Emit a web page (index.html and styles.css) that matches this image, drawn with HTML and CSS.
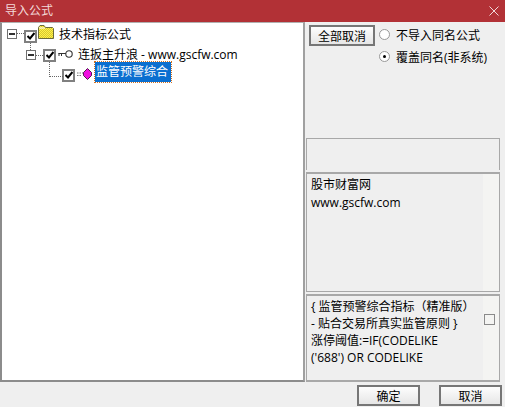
FILE: index.html
```html
<!DOCTYPE html>
<html lang="zh">
<head>
<meta charset="utf-8">
<title>导入公式</title>
<link rel="stylesheet" href="styles.css">
</head>
<body>
<div class="window">
  <header class="titlebar">
    <span class="title">导入公式</span>
    <svg class="close" width="10" height="10" viewBox="0 0 10 10"><path d="M0.5 0.5L9.5 9.5M9.5 0.5L0.5 9.5" stroke="#f0d8d8" stroke-width="1" fill="none"/></svg>
  </header>
  <div class="main">
    <div class="tree">
      <div class="row row1">
        <span class="expander"><i></i></span>
        <span class="dots d1"></span>
        <span class="check"><svg width="8" height="8" viewBox="0 0 8 8"><path d="M0.5 4L3 6.5L7.5 1" stroke="#000" stroke-width="2" fill="none"/></svg></span>
        <svg class="icon folder" width="16" height="14" viewBox="0 0 16 14"><defs><pattern id="dither" width="2" height="2" patternUnits="userSpaceOnUse"><rect width="2" height="2" fill="#fff24a"/><rect width="1" height="1" fill="#d8c830"/><rect x="1" y="1" width="1" height="1" fill="#d8c830"/></pattern></defs><path d="M0.5 13.5V2.5L2 0.5H6L7.5 2.5H14.5L15.5 3.5V13.5Z" fill="url(#dither)" stroke="#6b6b3a"/><path d="M1 3H7" stroke="#fff" fill="none"/></svg>
        <span class="label">技术指标公式</span>
      </div>
      <div class="row row2">
        <span class="expander"><i></i></span>
        <span class="dots d2"></span>
        <span class="check"><svg width="8" height="8" viewBox="0 0 8 8"><path d="M0.5 4L3 6.5L7.5 1" stroke="#000" stroke-width="2" fill="none"/></svg></span>
        <svg class="icon key" width="15" height="8" viewBox="0 0 15 8"><circle cx="11" cy="4" r="3.2" fill="#fff" stroke="#333" stroke-width="1.1"/><path d="M0.5 3.5H8M1 3V6M3.5 3.5V6" stroke="#333" fill="none"/></svg>
        <span class="label">连扳主升浪 - www.gscfw.com</span>
      </div>
      <div class="row row3">
        <span class="check"><svg width="8" height="8" viewBox="0 0 8 8"><path d="M0.5 4L3 6.5L7.5 1" stroke="#000" stroke-width="2" fill="none"/></svg></span>
        <svg class="icon gem" width="15" height="12" viewBox="0 0 15 12"><path d="M0 5H6M0 7.5H5" stroke="#777" stroke-dasharray="1.5 1" fill="none"/><path d="M10.5 0.5L14.5 4.5V7.5L10.5 11.5L6.5 7.5V4.5Z" fill="#f010e0" stroke="#401040" stroke-width="0.9"/></svg>
        <span class="label selected">监管预警综合</span>
      </div>
    </div>
    <div class="side">
      <div class="options">
        <button class="btn btn-all" type="button">全部取消</button>
        <div class="radios">
          <label class="radio"><span class="dot"></span>不导入同名公式</label>
          <label class="radio"><span class="dot on"></span>覆盖同名(非系统)</label>
        </div>
      </div>
      <div class="box box-empty"></div>
      <div class="box box-info">
        <div class="text info-text">股市财富网<br>www.gscfw.com</div>
        <div class="gutter"></div>
      </div>
      <div class="box box-code">
        <div class="text code-text">{ 监管预警综合指标（精准版）<br>- 贴合交易所真实监管原则 }<br>涨停阈值:=IF(CODELIKE<br>('688') OR CODELIKE</div>
        <div class="gutter"><span class="mini"></span></div>
      </div>
    </div>
  </div>
  <footer class="footer">
    <button class="btn btn-foot" type="button">确定</button>
    <button class="btn btn-foot" type="button">取消</button>
  </footer>
</div>
</body>
</html>
```
FILE: styles.css
```css
* { box-sizing: border-box; }
html, body { margin: 0; padding: 0; }
body {
  width: 505px;
  height: 407px;
  overflow: hidden;
  background: #efefef;
  font-family: "Open Sans", "Noto Sans CJK SC", sans-serif;
  font-size: 12px;
  color: #000;
}
.window { display: flex; flex-direction: column; height: 407px; }
.titlebar {
  height: 22px;
  flex: none;
  background: #b23136;
  color: #f3d9d9;
  display: flex;
  align-items: center;
  justify-content: space-between;
  padding: 0 6px 2px 5px;
}
.close { margin-top: 1px; }
.main { display: flex; height: 360px; flex: none; }
.tree {
  position: relative;
  width: 305px;
  flex: none;
  background: #fff;
  border-left: 2px solid #8c8c8c;
  border-right: 2px solid #a0a0a0;
  border-top: 1px solid #b0b0b0;
  border-bottom: 2px solid #8c8c8c;
  padding-top: 2px;
}
.row { display: flex; align-items: center; position: relative; }
.row1 { height: 20px; padding-left: 5px; }
.row2 { height: 20px; padding-left: 24px; }
.row3 { height: 20px; padding-left: 60px; }
.expander {
  width: 10px;
  height: 10px;
  border: 1px solid #707070;
  background: #fff;
  display: flex;
  align-items: center;
  justify-content: center;
  flex: none;
  margin-top: -3px;
}
.expander i { display: block; width: 6px; height: 2px; background: #333; }
.row2 .expander { margin-top: 0; }
.dots { height: 0; border-top: 1px dotted #666; flex: none; }
.d1, .d2 { width: 7px; margin-top: -3px; }
.d2 { margin-top: 0; }
.check {
  width: 13px;
  height: 13px;
  border: 2px solid #808080;
  background: #fff;
  flex: none;
  display: flex;
  align-items: center;
  justify-content: center;
}
.row1 .check { margin-top: 2px; }
.row1 .check::after {
  content: "";
  position: absolute;
  left: 28px;
  top: 18px;
  height: 7px;
  border-left: 1px dotted #666;
}
.row3::before {
  content: "";
  position: absolute;
  left: 47px;
  top: -3px;
  width: 13px;
  height: 14px;
  border-left: 1px dotted #666;
  border-bottom: 1px dotted #666;
}
.icon { flex: none; }
.folder { margin-left: 1px; margin-top: -6px; }
.key { margin-left: 2px; margin-top: -3px; }
.gem { margin-left: 2px; margin-top: -2px; }
.label { white-space: nowrap; font-size: 12px; color: #000; }
.row1 .label { margin-left: 5px; margin-top: -3px; }
.row2 .label { margin-left: 5px; margin-top: -3px; }
.row3 .label { margin-left: 3px; }
.selected {
  background: #0a6fd0;
  color: #fff;
  outline: 1px dotted #d07020;
  padding: 0 1px;
  height: 20px;
  line-height: 20px;
  width: 76px;
  margin-top: -6px;
}
.side {
  flex: 1;
  display: flex;
  flex-direction: column;
  padding: 0 5px 0 1px;
  min-width: 0;
}
.options {
  display: flex;
  height: 116px;
  flex: none;
  padding: 3px 0 0 3px;
}
.btn {
  font: inherit;
  color: #000;
  background: linear-gradient(#fdfdfd, #e6e6e6);
  border: 2px solid #767676;
  padding: 0;
  border-radius: 0;
}
.btn-all { width: 66px; height: 21px; flex: none; }
.radios { display: flex; flex-direction: column; gap: 5px; margin-left: 4px; padding-top: 1px; }
.radio { display: flex; align-items: center; height: 17px; white-space: nowrap; }
.dot {
  width: 11px;
  height: 11px;
  border-radius: 50%;
  border: 1px solid #999;
  background: #fff;
  margin-right: 6px;
  flex: none;
  position: relative;
}
.dot.on::after {
  content: "";
  position: absolute;
  left: 3px;
  top: 3px;
  width: 3px;
  height: 3px;
  border-radius: 50%;
  background: #000;
}
.box {
  border: 2px solid #a8a8a8;
  border-top-width: 1px;
  display: flex;
  width: 194px;
  flex: none;
}
.box-empty { height: 32px; border-width: 1px 1px 0 1px; border-color: #a8a8a8; margin-bottom: 2px; }
.box-info { height: 120px; margin-bottom: 2px; border-width: 2px 1px 1px 1px; }
.box-code { height: 88px; border-width: 2px 1px 2px 1px; }
.text { flex: 1; padding: 0 4px; }
.info-text { line-height: 18px; padding-top: 2px; }
.code-text { line-height: 17px; padding-top: 2px; }
.gutter {
  width: 16px;
  flex: none;
  background: #f4f4f2;
  position: relative;
}
.mini {
  position: absolute;
  left: 1px;
  top: 18px;
  width: 11px;
  height: 11px;
  border: 1px solid #8a8a8a;
  background: #f4f4f2;
}
.footer {
  flex: 1;
  display: flex;
  justify-content: flex-end;
  gap: 19px;
  padding: 3px 3px 1px 0;
}
.btn-foot { width: 63px; height: 21px; }
```
